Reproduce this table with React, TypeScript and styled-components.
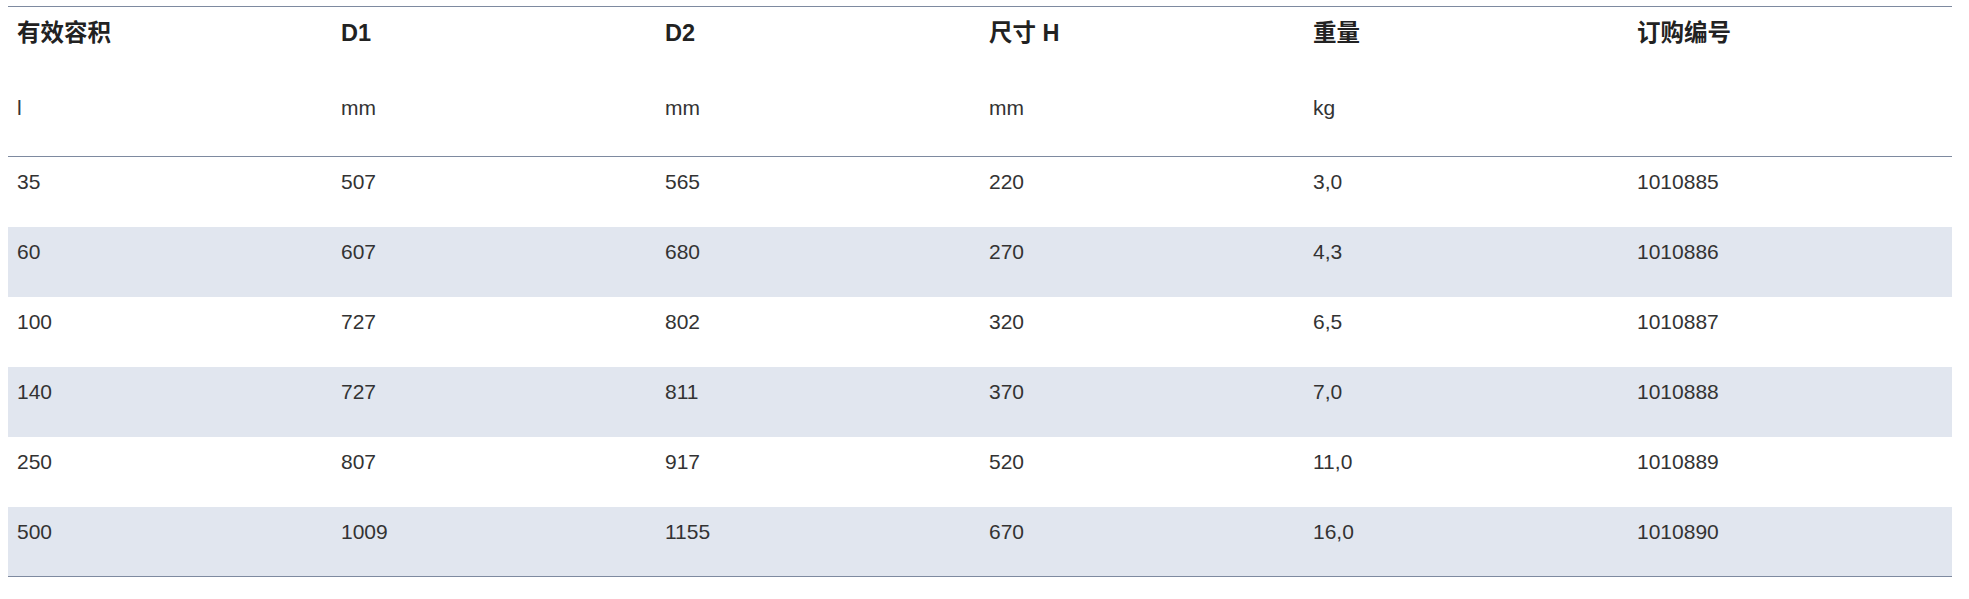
import React from "react";
import styled, { createGlobalStyle } from "styled-components";

const GlobalStyle = createGlobalStyle`
  html, body {
    margin: 0;
    padding: 0;
    background: #ffffff;
  }
  body {
    font-family: "Liberation Sans", Arial, "Noto Sans CJK SC", sans-serif;
  }
`;

const Page = styled.div`
  padding: 6px 17px 0 8px;
`;

const Table = styled.table`
  width: 1944px;
  table-layout: fixed;
  border-collapse: collapse;
  border-top: 1px solid #7e8aa0;
  border-bottom: 1px solid #7e8aa0;
`;

const HeadRow = styled.tr<{ $last?: boolean }>`
  height: 75px;
  border-bottom: ${(p) => (p.$last ? "1px solid #7e8aa0" : "none")};
`;

const HeadCell = styled.th<{ $unit?: boolean }>`
  text-align: left;
  vertical-align: top;
  padding: 11px 8px 0 9px;
  line-height: 30px;
  font-family: "Liberation Sans", Arial, "Noto Sans CJK SC", sans-serif;
  font-size: ${(p) => (p.$unit ? "21px" : "23.5px")};
  font-weight: ${(p) => (p.$unit ? 400 : 700)};
  color: ${(p) => (p.$unit ? "#333333" : "#222222")};
`;

const BodyRow = styled.tr<{ $shaded: boolean }>`
  height: 70px;
  background: ${(p) => (p.$shaded ? "#e1e6ef" : "#ffffff")};
`;

const Cell = styled.td`
  vertical-align: top;
  padding: 10px 8px 0 9px;
  line-height: 30px;
  font-size: 21px;
  color: #333333;
`;

const headers = ["有效容积", "D1", "D2", "尺寸 H", "重量", "订购编号"];
const units = ["l", "mm", "mm", "mm", "kg", ""];
const rows = [
  ["35", "507", "565", "220", "3,0", "1010885"],
  ["60", "607", "680", "270", "4,3", "1010886"],
  ["100", "727", "802", "320", "6,5", "1010887"],
  ["140", "727", "811", "370", "7,0", "1010888"],
  ["250", "807", "917", "520", "11,0", "1010889"],
  ["500", "1009", "1155", "670", "16,0", "1010890"],
];

export default function App() {
  return (
    <>
      <GlobalStyle />
      <Page>
        <Table>
          <thead>
            <HeadRow>
              {headers.map((h) => (
                <HeadCell key={h}>{h}</HeadCell>
              ))}
            </HeadRow>
            <HeadRow $last>
              {units.map((u, i) => (
                <HeadCell key={i} $unit>
                  {u}
                </HeadCell>
              ))}
            </HeadRow>
          </thead>
          <tbody>
            {rows.map((r, i) => (
              <BodyRow key={r[5]} $shaded={i % 2 === 1}>
                {r.map((c, j) => (
                  <Cell key={j}>{c}</Cell>
                ))}
              </BodyRow>
            ))}
          </tbody>
        </Table>
      </Page>
    </>
  );
}
